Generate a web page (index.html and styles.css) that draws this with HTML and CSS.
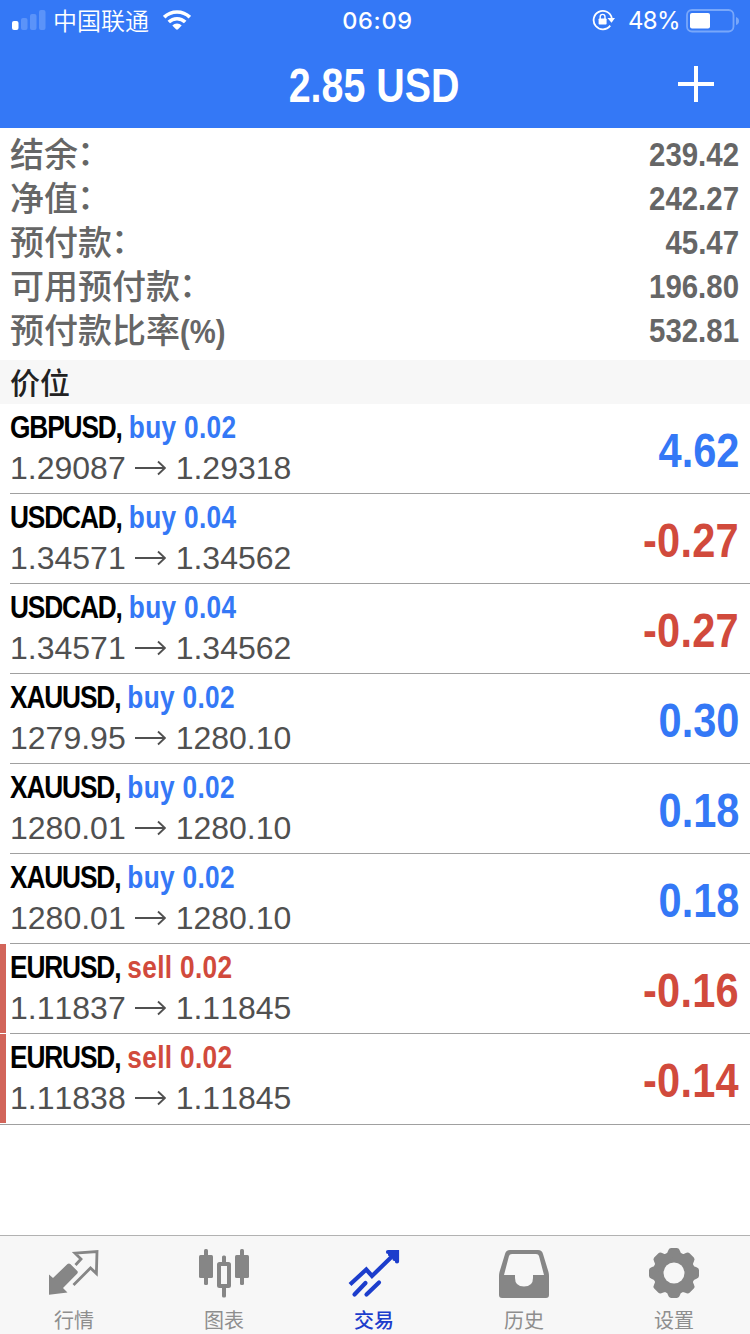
FILE: index.html
```html
<!DOCTYPE html>
<html lang="zh-CN">
<head>
<meta charset="utf-8">
<title>交易</title>
<link rel="stylesheet" href="styles.css">
</head>
<body>
<div class="app">
  <header class="top">
    <div class="status">
      <div class="status-left">
        <svg class="signal" width="34" height="22" viewBox="0 0 34 22"><rect x="0" y="12" width="6.5" height="9" rx="2" fill="#fff"/><g fill="#5b93f9"><rect x="9" y="9" width="6.5" height="12" rx="2"/><rect x="18" y="5" width="6.5" height="16" rx="2"/><rect x="27" y="1" width="6.5" height="20" rx="2"/></g></svg>
        <span class="carrier">中国联通</span>
        <svg class="wifi" width="28" height="20" viewBox="0 0 28 20"><g fill="none" stroke="#fff" stroke-width="3.6"><path d="M1.2 7.2a18.5 18.5 0 0 1 25.6 0"/><path d="M5.8 12a11.8 11.8 0 0 1 16.4 0"/></g><path d="M9.3 15.5a6.8 6.8 0 0 1 9.4 0L15 19.2q-1 .9-2 0z" fill="#fff"/></svg>
      </div>
      <div class="clock">06:09</div>
      <div class="status-right">
        <svg class="lock" width="24" height="22" viewBox="0 0 24 22"><path d="M18.2 16.6A9.2 9.2 0 1 1 19.8 9" fill="none" stroke="#fff" stroke-width="1.8"/><path d="M15.500 9h7.500l-3.500 4.700z" fill="#fff"/><rect x="6.6" y="9.4" width="8" height="6.2" rx=".8" fill="#fff"/><path d="M8.2 10V7.8a2.4 2.4 0 0 1 4.8 0V10" fill="none" stroke="#fff" stroke-width="1.4"/></svg>
        <span class="percent">48%</span>
        <svg class="battery" width="54" height="24" viewBox="0 0 54 24"><rect x="1" y="1" width="46.5" height="21.5" rx="5" fill="none" stroke="#78a7fa" stroke-width="1.8"/><rect x="4" y="4" width="20" height="15.5" rx="2" fill="#fff"/><path d="M50 8q3 1 3 4t-3 4z" fill="#78a7fa"/></svg>
      </div>
    </div>
    <div class="nav">
      <h1 class="total">2.85 USD</h1>
      <svg class="add" width="36" height="36" viewBox="0 0 36 36"><path d="M0 18h36M18 0v36" stroke="#fff" stroke-width="4"/></svg>
    </div>
  </header>
  <section class="summary">
    <div class="line"><span class="label">结余<i class="colon">：</i></span><b class="amount">239.42</b></div>
    <div class="line"><span class="label">净值<i class="colon">：</i></span><b class="amount">242.27</b></div>
    <div class="line"><span class="label">预付款<i class="colon">：</i></span><b class="amount">45.47</b></div>
    <div class="line"><span class="label">可用预付款<i class="colon">：</i></span><b class="amount">196.80</b></div>
    <div class="line"><span class="label">预付款比率<b class="unit">(%)</b></span><b class="amount">532.81</b></div>
  </section>
  <h2 class="section">价位</h2>
  <main class="list" id="list"></main>
  <nav class="tabs">
    <a class="tab"><svg width="52" height="50" viewBox="0 0 52 50"><path d="M1 26.500 5 30 19.500 16q1.500-1.200 2.800 0l7 7q1 1.200 0 2.400L15 40l4.500 4.500L1 46.800z" fill="#868686"/><path d="M27.500 17 33 11 27 5.200l22-1.700-.600 22L42.500 20 25.500 37" fill="none" stroke="#868686" stroke-width="2.800"/></svg><span>行情</span></a>
    <a class="tab"><svg width="52" height="50" viewBox="0 0 52 50"><g fill="#868686"><rect x="1" y="7" width="14" height="23" rx="1.500"/><rect x="6" y="1" width="4" height="36" rx="1.500"/><rect x="37" y="7" width="14" height="23" rx="1.500"/><rect x="42" y="1" width="4" height="36" rx="1.500"/><rect x="24" y="7.500" width="4" height="8" rx="1.500"/><rect x="24" y="38" width="4" height="11.500" rx="1.500"/></g><rect x="21" y="16" width="10" height="22" rx=".5" fill="none" stroke="#868686" stroke-width="4"/></svg><span>图表</span></a>
    <a class="tab active"><svg width="52" height="50" viewBox="0 0 52 50"><g fill="none" stroke="#1c3dcc" stroke-width="4.200"><path d="M2 36.500 18.300 21.500 24 28 46 6.500"/><path d="M40 4h9v9.500M42 6.500h4.500V11" stroke-linecap="round"/><path d="M6.500 46.500 17.500 35M18.500 46.500 31 34.500" stroke-linecap="round"/></g></svg><span>交易</span></a>
    <a class="tab"><svg width="52" height="50" viewBox="0 0 52 50"><path fill-rule="evenodd" d="M12 2h28q4 0 5 4l5.500 18q.5 2 .5 4v19q0 3-3 3H4q-3 0-3-3V28q0-2 .5-4L7 6q1-4 5-4zM14 6q-2.500 0-3 2L6 27h11v3q0 8.500 9 8.500t9-8.500v-3h11L41 8q-.5-2-3-2z" fill="#868686"/></svg><span>历史</span></a>
    <a class="tab"><svg width="52" height="50" viewBox="0 0 52 50"><g fill="#868686"><circle cx="26" cy="25" r="21"/><g id="teeth"></g></g><circle cx="26" cy="25" r="10.500" fill="#f7f7f7"/></svg><span>设置</span></a>
  </nav>
</div>
<script src="app.js"></script>
</body>
</html>
```

FILE: styles.css
```css
* { box-sizing: border-box; margin: 0; padding: 0; }

body {
  width: 750px;
  height: 1334px;
  overflow: hidden;
  background: #fff;
  font-family: "Liberation Sans", "Noto Sans CJK SC", sans-serif;
  font-kerning: none;
}

svg { display: block; flex: none; }

.app { display: flex; flex-direction: column; height: 1334px; }

.top { height: 128px; background: #3478f6; color: #fff; }

.status {
  display: grid;
  grid-template-columns: 1fr auto 1fr;
  align-items: center;
  height: 40px;
  padding: 0 10px 0 12px;
}

.status-left, .status-right { display: flex; align-items: center; }
.status-right { justify-content: flex-end; }
.signal { margin-top: -2px; }
.carrier { margin: -2px 0 0 7px; font-size: 24px; line-height: 40px; font-family: "Noto Sans CJK SC", sans-serif; font-weight: 350; }
.wifi { margin: -2px 0 0 14px; }
.lock { margin: -1px -1px 0 0; }
.clock { font: 500 23.5px/40px Inter, sans-serif; letter-spacing: .7px; padding: 1px 0 0 3px; }
.percent { margin: 1px 6px 0 13px; font: 400 24px/38px Inter, sans-serif; letter-spacing: -.6px; }

.nav {
  display: grid;
  grid-template-columns: 1fr auto 1fr;
  align-items: center;
  height: 88px;
  padding: 0 36px;
}

.total { grid-column: 2; font-size: 48px; line-height: 88px; transform: scaleX(.82); margin: 2px -19px 0 -21px; }
.add { grid-column: 3; justify-self: end; margin-top: -2px; }

.summary { height: 232px; padding: 4px 10px 0; color: #666; }

.line {
  display: flex;
  justify-content: space-between;
  height: 44px;
  font: 500 34px/44px "Noto Sans CJK SC", sans-serif;
}

.label { margin-top: -1px; }
.colon { display: inline-block; font-style: normal; transform: translate(-1px, -2px); }
.unit { display: inline-block; font: bold 34px/44px "Liberation Sans", sans-serif; transform: scaleX(.86); transform-origin: left; }
.amount { font: bold 34px/44px "Liberation Sans", sans-serif; transform: scaleX(.865); transform-origin: right; margin-right: 1px; }

.section {
  height: 44px;
  padding-left: 10px;
  background: #f7f7f7;
  color: #222;
  font: 500 30px/43px "Noto Sans CJK SC", sans-serif;
}

.list { display: flex; flex-direction: column; flex: 1; }

.position { display: flex; height: 90px; }
.mark { width: 6px; height: 89px; margin-right: 4px; }
.sell .mark { background: #d2655a; }

.body {
  display: flex;
  flex: 1;
  justify-content: space-between;
  padding-right: 11px;
  border-bottom: 1px solid #a0a0a0;
}
.position:last-child { height: 91px; border-bottom: 1px solid #a0a0a0; }
.position:last-child .body { border-bottom: 0; }

.head { height: 43px; font: bold 32px/46px "Liberation Sans", sans-serif; white-space: nowrap; transform: scaleX(.82); transform-origin: left; }
.symbol { color: #000; letter-spacing: -1.35px; }
.side { margin-left: 8.5px; letter-spacing: .4px; color: #3478f6; }
.sell .side, .profit.loss { color: #d14a3c; }

.prices { display: flex; align-items: center; height: 42px; color: #505050; font-size: 32px; line-height: 42px; }
.arrow { margin: 0 10px 0 9px; }
.profit { color: #3478f6; font-size: 48px; font-weight: bold; line-height: 94px; transform: scaleX(.865); transform-origin: right; }
.profit.loss { letter-spacing: .3px; }

.tabs {
  display: grid;
  grid-template-columns: repeat(5, 150px);
  height: 99px;
  padding-top: 12px;
  border-top: 1px solid #b2b2b2;
  background: #f7f7f7;
  margin-top: auto;
}
.tab { display: flex; flex-direction: column; align-items: center; padding-right: 2px; color: #8e8e8e; font: 400 20px/32px "Noto Sans CJK SC", sans-serif; }
.tab span { margin-top: 6px; }
.active { color: #1c3dcc; font-weight: 500; }
```

FILE: app.js
```js
const positions = [
  ["GBPUSD", "buy", "0.02", "1.29087", "1.29318", "4.62"],
  ["USDCAD", "buy", "0.04", "1.34571", "1.34562", "-0.27"],
  ["USDCAD", "buy", "0.04", "1.34571", "1.34562", "-0.27"],
  ["XAUUSD", "buy", "0.02", "1279.95", "1280.10", "0.30"],
  ["XAUUSD", "buy", "0.02", "1280.01", "1280.10", "0.18"],
  ["XAUUSD", "buy", "0.02", "1280.01", "1280.10", "0.18"],
  ["EURUSD", "sell", "0.02", "1.11837", "1.11845", "-0.16"],
  ["EURUSD", "sell", "0.02", "1.11838", "1.11845", "-0.14"],
];

document.getElementById("list").innerHTML = positions.map(([symbol, side, lots, open, now, profit]) => `
  <article class="position ${side}">
    <div class="mark"></div>
    <div class="body">
      <div>
        <div class="head"><span class="symbol">${symbol},</span><span class="side">${side} ${lots}</span></div>
        <div class="prices"><span>${open}</span><svg class="arrow" width="31" height="16" viewBox="0 0 31 16"><path d="M0 8h30M23 1.500 30 8l-7 6.500" fill="none" stroke="#505050" stroke-width="1.900"/></svg><span>${now}</span></div>
      </div>
      <div class="profit ${profit.startsWith("-") ? "loss" : ""}">${profit}</div>
    </div>
  </article>`).join("");

// Eight gear teeth around the hub.
document.getElementById("teeth").innerHTML = Array.from({ length: 8 }, (_, i) =>
  `<path d="M16 7q3-.5 4-4 .8-3 3-3h6q2.200 0 3 3 1 3.500 4 4v6H16z" transform="rotate(${i * 45} 26 25)"/>`).join("");
```
